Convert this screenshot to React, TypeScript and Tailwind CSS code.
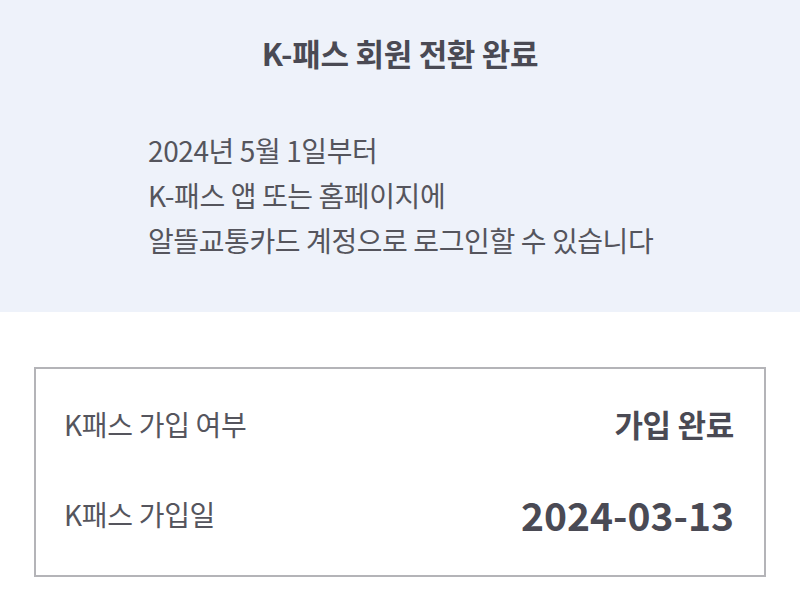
import React from 'react';

const font = "font-['Noto_Sans_CJK_KR','Noto_Sans',sans-serif]";

const Row: React.FC<{ label: string; value: string; big?: boolean }> = ({ label, value, big }) => (
  <div className="flex items-center justify-between h-[90px]">
    <span className="text-[28px] tracking-[-0.3px] text-[#55555d]">{label}</span>
    <span className={`font-bold text-[#4a4a54] ${big ? 'text-[39px]' : 'text-[31px] tracking-[-0.3px]'}`}>{value}</span>
  </div>
);

export default function App() {
  return (
    <div className={`w-[800px] h-[600px] bg-white ${font}`}>
      <section className="bg-[#eef2fa] h-[312px] pt-[32px]">
        <h1 className="text-center text-[31px] font-bold text-[#4a4a54] leading-[42px] tracking-[-0.3px]">K-패스 회원 전환 완료</h1>
        <div className="pl-[148px] mt-[54px] text-[28px] leading-[45px] tracking-[-0.4px] text-[#55555d]">
          <p>2024년 5월 1일부터</p>
          <p>K-패스 앱 또는 홈페이지에</p>
          <p>알뜰교통카드 계정으로 로그인할 수 있습니다</p>
        </div>
      </section>
      <div className="mx-[34px] mt-[55px] border-2 border-[#b4b4b8] pl-[28px] pr-[30px] pt-[10px] pb-[16px]">
        <Row label="K패스 가입 여부" value="가입 완료" />
        <Row label="K패스 가입일" value="2024-03-13" big />
      </div>
    </div>
  );
}
